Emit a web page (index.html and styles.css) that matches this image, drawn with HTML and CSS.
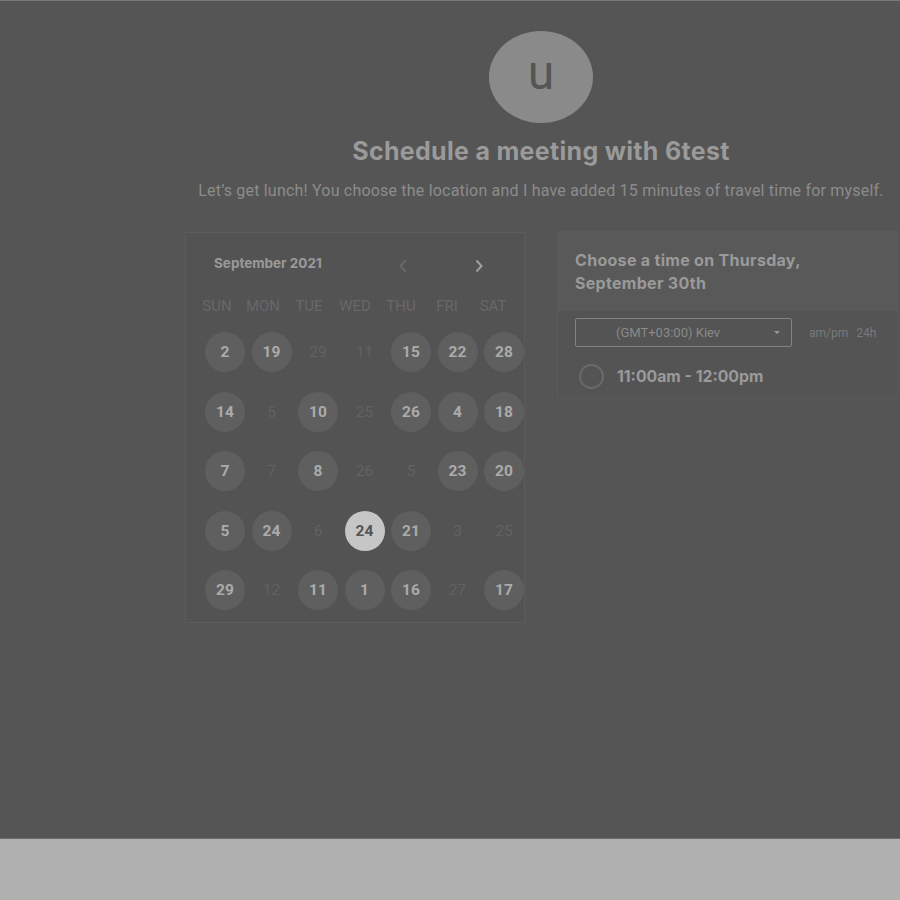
FILE: index.html
```html
<!DOCTYPE html>
<html>
<head>
<meta charset="utf-8">
<link rel="stylesheet" href="styles.css">
</head>
<body>
<div class="page">
  <main class="main">
    <div class="content">
      <div class="avatar"><span>u</span></div>
      <h1 class="title">Schedule a meeting with 6test</h1>
      <p class="subtitle">Let’s get lunch! You choose the location and I have added 15 minutes of travel time for myself.</p>
      <div class="panels">
        <section class="calendar">
          <div class="cal-head">
            <span class="month">September 2021</span>
            <span class="nav">
              <svg class="arrow prev" width="10" height="14" viewBox="0 0 10 14"><path d="M7.5 1.5 L2.5 7 L7.5 12.5" fill="none" stroke="currentColor" stroke-width="2"/></svg>
              <svg class="arrow next" width="10" height="14" viewBox="0 0 10 14"><path d="M2.5 1.5 L7.5 7 L2.5 12.5" fill="none" stroke="currentColor" stroke-width="2"/></svg>
            </span>
          </div>
          <div class="weekdays">
            <span>SUN</span><span>MON</span><span>TUE</span><span>WED</span><span>THU</span><span>FRI</span><span>SAT</span>
          </div>
          <div class="days">
            <span class="day on">2</span><span class="day on">19</span><span class="day">29</span><span class="day">11</span><span class="day on">15</span><span class="day on">22</span><span class="day on">28</span>
            <span class="day on">14</span><span class="day">5</span><span class="day on">10</span><span class="day">25</span><span class="day on">26</span><span class="day on">4</span><span class="day on">18</span>
            <span class="day on">7</span><span class="day">7</span><span class="day on">8</span><span class="day">26</span><span class="day">5</span><span class="day on">23</span><span class="day on">20</span>
            <span class="day on">5</span><span class="day on">24</span><span class="day">6</span><span class="day sel">24</span><span class="day on">21</span><span class="day">3</span><span class="day">25</span>
            <span class="day on">29</span><span class="day">12</span><span class="day on">11</span><span class="day on">1</span><span class="day on">16</span><span class="day">27</span><span class="day on">17</span>
          </div>
        </section>
        <section class="times">
          <div class="times-head">Choose a time on Thursday,<br>September 30th</div>
          <div class="tz-row">
            <div class="tz-select">
              <span class="tz-text">(GMT+03:00) Kiev</span>
              <span class="caret"></span>
            </div>
            <div class="fmt"><span>am/pm</span><span>24h</span></div>
          </div>
          <div class="slot">
            <span class="radio"></span>
            <span class="slot-text">11:00am - 12:00pm</span>
          </div>
        </section>
      </div>
    </div>
  </main>
  <footer class="footer"></footer>
</div>
</body>
</html>
```
FILE: styles.css
```css
* { box-sizing: border-box; }
html, body { margin: 0; padding: 0; }
body {
  background: #555555;
  font-family: Roboto, "Liberation Sans", sans-serif;
  color: #999;
}
.page {
  height: 900px;
  display: flex;
  flex-direction: column;
  border-top: 1px solid #7a7a7a;
}
.main {
  height: 837px;
  background: #555555;
}
.footer {
  flex: 1;
  background: #b0b0b0;
  border-top: 1px solid #6a6a6a;
}
.content {
  margin-left: 182px;
  width: 718px;
  padding-top: 30px;
  display: flex;
  flex-direction: column;
  align-items: center;
}
.avatar {
  width: 104px;
  height: 92px;
  border-radius: 50%;
  background: #8a8a8a;
  display: flex;
  align-items: center;
  justify-content: center;
}
.avatar span {
  font-family: Roboto, "Liberation Sans", sans-serif;
  font-size: 48px;
  color: #555;
  line-height: 1;
  margin-top: -8px;
}
.title {
  margin: 13px 0 0;
  font-family: Inter, "Liberation Sans", sans-serif;
  font-weight: 700;
  font-size: 25px;
  line-height: 30px;
  color: #9a9a9a;
  letter-spacing: 0.3px;
}
.subtitle {
  margin: 15px 0 0;
  font-size: 16px;
  line-height: 20px;
  color: #8c8c8c;
  letter-spacing: 0.2px;
}
.panels {
  align-self: stretch;
  margin-top: 29px;
  display: flex;
  align-items: flex-start;
  padding-left: 3px;
  gap: 32px;
}
.calendar {
  width: 340px;
  height: 391px;
  margin-top: 2px;
  background: #535353;
  border: 1px solid #5c5c5c;
  padding: 18px 0 0 19px;
}
.cal-head {
  display: flex;
  align-items: center;
  height: 24px;
  padding-left: 9px;
}
.month {
  font-family: Inter, "Liberation Sans", sans-serif;
  font-weight: 700;
  font-size: 13.5px;
  color: #9a9a9a;
  width: 184px;
}
.nav {
  display: flex;
  gap: 66px;
  margin-top: 6px;
}
.arrow.prev { color: #686868; }
.arrow.next { color: #a0a0a0; }
.weekdays {
  margin-top: 21px;
  margin-left: -8px;
  display: grid;
  grid-template-columns: repeat(7, 40px);
  column-gap: 6px;
  font-size: 15px;
  line-height: 20px;
  color: #686868;
  text-align: center;
}
.days {
  margin-top: 16px;
  display: grid;
  grid-template-columns: repeat(7, 40px);
  grid-auto-rows: 40px;
  column-gap: 6.5px;
  row-gap: 19.5px;
}
.day {
  width: 40px;
  height: 40px;
  border-radius: 50%;
  display: flex;
  align-items: center;
  justify-content: center;
  font-size: 15.5px;
  color: #626262;
}
.day.on {
  background: #5f5f5f;
  color: #ababab;
  font-weight: 700;
}
.day.sel {
  background: #c6c6c6;
  color: #555;
  font-weight: 700;
}
.times {
  width: 341px;
  margin-top: 1px;
  background: #545454;
  border: 1px solid #5a5a5a;
}
.times-head {
  background: #595959;
  padding: 17px 17px 14px;
  font-family: Inter, "Liberation Sans", sans-serif;
  font-weight: 700;
  font-size: 16px;
  line-height: 23px;
  letter-spacing: 0.3px;
  color: #9a9a9a;
  border-bottom: 1px solid #5e5e5e;
}
.tz-row {
  display: flex;
  align-items: center;
  padding: 8px 0 0 17px;
}
.tz-select {
  width: 217px;
  height: 29px;
  border: 1px solid #828282;
  border-radius: 2px;
  display: flex;
  align-items: center;
  padding-left: 40px;
  position: relative;
}
.tz-text {
  font-size: 13px;
  color: #8a8a8a;
}
.caret {
  position: absolute;
  right: 11px;
  top: 12px;
  width: 0;
  height: 0;
  border-left: 3.5px solid transparent;
  border-right: 3.5px solid transparent;
  border-top: 3.5px solid #999;
}
.fmt {
  margin-left: 17px;
  display: flex;
  gap: 8px;
  font-size: 12px;
  color: #7a7a7a;
}
.slot {
  display: flex;
  align-items: center;
  padding: 17px 0 9px 21px;
}
.radio {
  width: 25px;
  height: 25px;
  border-radius: 50%;
  border: 2px solid #6a6a6a;
}
.slot-text {
  margin-left: 13px;
  font-family: Inter, "Liberation Sans", sans-serif;
  font-weight: 700;
  font-size: 15.8px;
  color: #9a9a9a;
}
```
